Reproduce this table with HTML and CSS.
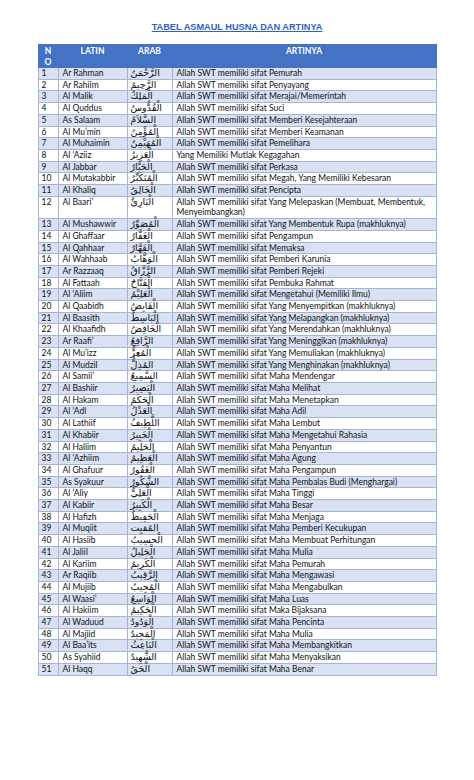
FILE: index.html
```html
<!DOCTYPE html>
<html lang="id">
<head>
<meta charset="utf-8">
<title>Tabel Asmaul Husna dan Artinya</title>
<link rel="stylesheet" href="styles.css">
</head>
<body>
<main class="page">
  <h1 class="title">TABEL ASMAUL HUSNA DAN ARTINYA</h1>
  <table class="husna">
    <colgroup>
      <col class="c-no"><col class="c-latin"><col class="c-arab"><col class="c-arti">
    </colgroup>
    <thead>
      <tr><th>N<br>O</th><th>LATIN</th><th>ARAB</th><th>ARTINYA</th></tr>
    </thead>
    <tbody>
      <tr><td>1</td><td>Ar Rahman</td><td class="ar" lang="ar">الرَّحْمَنُ</td><td>Allah SWT memiliki sifat Pemurah</td></tr>
      <tr><td>2</td><td>Ar Rahiim</td><td class="ar" lang="ar">الرَّحِيمُ</td><td>Allah SWT memiliki sifat Penyayang</td></tr>
      <tr><td>3</td><td>Al Malik</td><td class="ar" lang="ar">الْمَلِكُ</td><td>Allah SWT memiliki sifat Merajai/Memerintah</td></tr>
      <tr><td>4</td><td>Al Quddus</td><td class="ar" lang="ar">الْقُدُّوسُ</td><td>Allah SWT memiliki sifat Suci</td></tr>
      <tr><td>5</td><td>As Salaam</td><td class="ar" lang="ar">السَّلاَمُ</td><td>Allah SWT memiliki sifat Memberi Kesejahteraan</td></tr>
      <tr><td>6</td><td>Al Mu’min</td><td class="ar" lang="ar">الْمُؤْمِنُ</td><td>Allah SWT memiliki sifat Memberi Keamanan</td></tr>
      <tr><td>7</td><td>Al Muhaimin</td><td class="ar" lang="ar">الْمُهَيْمِنُ</td><td>Allah SWT memiliki sifat Pemelihara</td></tr>
      <tr><td>8</td><td>Al ‘Aziiz</td><td class="ar" lang="ar">الْعَزِيزُ</td><td>Yang Memiliki Mutlak Kegagahan</td></tr>
      <tr><td>9</td><td>Al Jabbar</td><td class="ar" lang="ar">الْجَبَّارُ</td><td>Allah SWT memiliki sifat Perkasa</td></tr>
      <tr><td>10</td><td>Al Mutakabbir</td><td class="ar" lang="ar">الْمُتَكَبِّرُ</td><td>Allah SWT memiliki sifat Megah, Yang Memiliki Kebesaran</td></tr>
      <tr><td>11</td><td>Al Khaliq</td><td class="ar" lang="ar">الْخَالِقُ</td><td>Allah SWT memiliki sifat Pencipta</td></tr>
      <tr><td>12</td><td>Al Baari’</td><td class="ar" lang="ar">الْبَارِئُ</td><td>Allah SWT memiliki sifat Yang Melepaskan (Membuat, Membentuk,<br>Menyeimbangkan)</td></tr>
      <tr><td>13</td><td>Al Mushawwir</td><td class="ar" lang="ar">الْمُصَوِّرُ</td><td>Allah SWT memiliki sifat Yang Membentuk Rupa (makhluknya)</td></tr>
      <tr><td>14</td><td>Al Ghaffaar</td><td class="ar" lang="ar">الْغَفَّارُ</td><td>Allah SWT memiliki sifat Pengampun</td></tr>
      <tr><td>15</td><td>Al Qahhaar</td><td class="ar" lang="ar">الْقَهَّارُ</td><td>Allah SWT memiliki sifat Memaksa</td></tr>
      <tr><td>16</td><td>Al Wahhaab</td><td class="ar" lang="ar">الْوَهَّابُ</td><td>Allah SWT memiliki sifat Pemberi Karunia</td></tr>
      <tr><td>17</td><td>Ar Razzaaq</td><td class="ar" lang="ar">الرَّزَّاقُ</td><td>Allah SWT memiliki sifat Pemberi Rejeki</td></tr>
      <tr><td>18</td><td>Al Fattaah</td><td class="ar" lang="ar">الْفَتَّاحُ</td><td>Allah SWT memiliki sifat Pembuka Rahmat</td></tr>
      <tr><td>19</td><td>Al ‘Aliim</td><td class="ar" lang="ar">الْعَلِيْمُ</td><td>Allah SWT memiliki sifat Mengetahui (Memiliki Ilmu)</td></tr>
      <tr><td>20</td><td>Al Qaabidh</td><td class="ar" lang="ar">الْقَابِضُ</td><td>Allah SWT memiliki sifat Yang Menyempitkan (makhluknya)</td></tr>
      <tr><td>21</td><td>Al Baasith</td><td class="ar" lang="ar">الْبَاسِطُ</td><td>Allah SWT memiliki sifat Yang Melapangkan (makhluknya)</td></tr>
      <tr><td>22</td><td>Al Khaafidh</td><td class="ar" lang="ar">الْخَافِضُ</td><td>Allah SWT memiliki sifat Yang Merendahkan (makhluknya)</td></tr>
      <tr><td>23</td><td>Ar Raafi’</td><td class="ar" lang="ar">الرَّافِعُ</td><td>Allah SWT memiliki sifat Yang Meninggikan (makhluknya)</td></tr>
      <tr><td>24</td><td>Al Mu’izz</td><td class="ar" lang="ar">الْمُعِزُّ</td><td>Allah SWT memiliki sifat Yang Memuliakan (makhluknya)</td></tr>
      <tr><td>25</td><td>Al Mudzil</td><td class="ar" lang="ar">المُذِلُّ</td><td>Allah SWT memiliki sifat Yang Menghinakan (makhluknya)</td></tr>
      <tr><td>26</td><td>Al Samii’</td><td class="ar" lang="ar">السَّمِيعُ</td><td>Allah SWT memiliki sifat Maha Mendengar</td></tr>
      <tr><td>27</td><td>Al Bashiir</td><td class="ar" lang="ar">الْبَصِيرُ</td><td>Allah SWT memiliki sifat Maha Melihat</td></tr>
      <tr><td>28</td><td>Al Hakam</td><td class="ar" lang="ar">الْحَكَمُ</td><td>Allah SWT memiliki sifat Maha Menetapkan</td></tr>
      <tr><td>29</td><td>Al ‘Adl</td><td class="ar" lang="ar">الْعَدْلُ</td><td>Allah SWT memiliki sifat Maha Adil</td></tr>
      <tr><td>30</td><td>Al Lathiif</td><td class="ar" lang="ar">اللَّطِيفُ</td><td>Allah SWT memiliki sifat Maha Lembut</td></tr>
      <tr><td>31</td><td>Al Khabiir</td><td class="ar" lang="ar">الْخَبِيرُ</td><td>Allah SWT memiliki sifat Maha Mengetahui Rahasia</td></tr>
      <tr><td>32</td><td>Al Haliim</td><td class="ar" lang="ar">الْحَلِيمُ</td><td>Allah SWT memiliki sifat Maha Penyantun</td></tr>
      <tr><td>33</td><td>Al ‘Azhiim</td><td class="ar" lang="ar">الْعَظِيمُ</td><td>Allah SWT memiliki sifat Maha Agung</td></tr>
      <tr><td>34</td><td>Al Ghafuur</td><td class="ar" lang="ar">الْغَفُورُ</td><td>Allah SWT memiliki sifat Maha Pengampun</td></tr>
      <tr><td>35</td><td>As Syakuur</td><td class="ar" lang="ar">الشَّكُورُ</td><td>Allah SWT memiliki sifat Maha Pembalas Budi (Menghargai)</td></tr>
      <tr><td>36</td><td>Al ‘Aliy</td><td class="ar" lang="ar">الْعَلِيُّ</td><td>Allah SWT memiliki sifat Maha Tinggi</td></tr>
      <tr><td>37</td><td>Al Kabiir</td><td class="ar" lang="ar">الْكَبِيرُ</td><td>Allah SWT memiliki sifat Maha Besar</td></tr>
      <tr><td>38</td><td>Al Hafizh</td><td class="ar" lang="ar">الْحَفِيظُ</td><td>Allah SWT memiliki sifat Maha Menjaga</td></tr>
      <tr><td>39</td><td>Al Muqiit</td><td class="ar" lang="ar">المُقيِت</td><td>Allah SWT memiliki sifat Maha Pemberi Kecukupan</td></tr>
      <tr><td>40</td><td>Al Hasiib</td><td class="ar" lang="ar">الْحسِيبُ</td><td>Allah SWT memiliki sifat Maha Membuat Perhitungan</td></tr>
      <tr><td>41</td><td>Al Jaliil</td><td class="ar" lang="ar">الْجَلِيلُ</td><td>Allah SWT memiliki sifat Maha Mulia</td></tr>
      <tr><td>42</td><td>Al Kariim</td><td class="ar" lang="ar">الْكَرِيمُ</td><td>Allah SWT memiliki sifat Maha Pemurah</td></tr>
      <tr><td>43</td><td>Ar Raqiib</td><td class="ar" lang="ar">الرَّقِيبُ</td><td>Allah SWT memiliki sifat Maha Mengawasi</td></tr>
      <tr><td>44</td><td>Al Mujiib</td><td class="ar" lang="ar">الْمُجِيبُ</td><td>Allah SWT memiliki sifat Maha Mengabulkan</td></tr>
      <tr><td>45</td><td>Al Waasi’</td><td class="ar" lang="ar">الْوَاسِعُ</td><td>Allah SWT memiliki sifat Maha Luas</td></tr>
      <tr><td>46</td><td>Al Hakiim</td><td class="ar" lang="ar">الْحَكِيمُ</td><td>Allah SWT memiliki sifat Maka Bijaksana</td></tr>
      <tr><td>47</td><td>Al Waduud</td><td class="ar" lang="ar">الْوَدُودُ</td><td>Allah SWT memiliki sifat Maha Pencinta</td></tr>
      <tr><td>48</td><td>Al Majiid</td><td class="ar" lang="ar">الْمَجِيدُ</td><td>Allah SWT memiliki sifat Maha Mulia</td></tr>
      <tr><td>49</td><td>Al Baa’its</td><td class="ar" lang="ar">الْبَاعِثُ</td><td>Allah SWT memiliki sifat Maha Membangkitkan</td></tr>
      <tr><td>50</td><td>As Syahiid</td><td class="ar" lang="ar">الشَّهِيدُ</td><td>Allah SWT memiliki sifat Maha Menyaksikan</td></tr>
      <tr><td>51</td><td>Al Haqq</td><td class="ar" lang="ar">الْحَقُ</td><td>Allah SWT memiliki sifat Maha Benar</td></tr>
    </tbody>
  </table>
</main>
</body>
</html>
```
FILE: styles.css
```css
html, body {
  margin: 0;
  padding: 0;
  background: #ffffff;
}

.page {
  padding-top: 22px;
  display: flex;
  flex-direction: column;
  align-items: center;
}

.title {
  margin: 0 0 11px 0;
  font-family: "Liberation Sans", Arial, sans-serif;
  font-weight: bold;
  font-size: 9.2px;
  line-height: 11px;
  color: #2f62c2;
  text-decoration: underline;
  text-underline-offset: 1px;
}

.husna {
  width: 398px;
  border-collapse: collapse;
  table-layout: fixed;
  font-family: Lato, "Liberation Sans", sans-serif;
  font-size: 8.5px;
  color: #111111;
}

.c-no { width: 20px; }
.c-latin { width: 69px; }
.c-arab { width: 45px; }
.c-arti { width: 264px; }

.husna th {
  background: #4472c4;
  color: #ffffff;
  font-weight: bold;
  text-align: center;
  vertical-align: top;
  padding: 1px 2px 0 2px;
  line-height: 10.5px;
  height: 21px;
  border: 1px solid #4472c4;
}

.husna td {
  padding: 0 3px 0 4px;
  line-height: 10.7px;
  vertical-align: top;
  border: 1px solid #a3b5da;
  white-space: nowrap;
  overflow: hidden;
}

.husna td:first-child {
  padding-left: 3px;
}

.husna tbody tr:nth-child(odd) td {
  background: #d9e1f2;
}

.husna td.ar {
  font-family: "DejaVu Sans", sans-serif;
  font-size: 9.5px;
  font-weight: normal;
  direction: rtl;
  text-align: left;
  padding-left: 3px;
  overflow: visible;
}
```
